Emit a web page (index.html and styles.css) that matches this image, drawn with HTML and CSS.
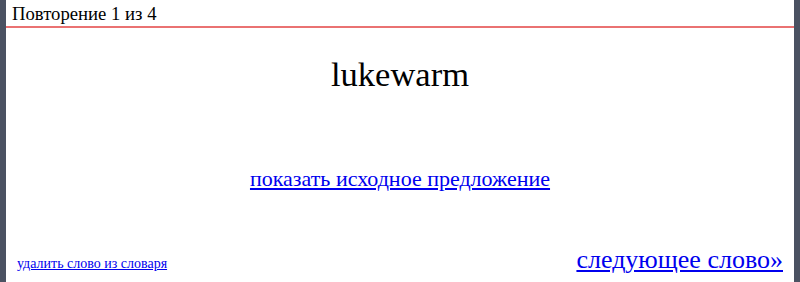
FILE: index.html
```html
<!DOCTYPE html>
<html lang="ru">
<head>
<meta charset="utf-8">
<link rel="stylesheet" href="styles.css">
</head>
<body>
<div class="panel">
  <div class="header">Повторение 1 из 4</div>
  <div class="word">lukewarm</div>
  <div class="show"><a href="#">показать исходное предложение</a></div>
  <div class="footer">
    <a class="delete" href="#">удалить слово из словаря</a>
    <a class="next" href="#">следующее слово»</a>
  </div>
</div>
</body>
</html>
```
FILE: styles.css
```css
html, body {
  margin: 0;
  padding: 0;
  height: 100%;
}
body {
  background: #4b5262;
  padding: 0 6px;
  box-sizing: border-box;
  font-family: "Liberation Serif", "DejaVu Serif", serif;
  color: #000;
}
.panel {
  background: #fff;
  height: 282px;
  display: flex;
  flex-direction: column;
}
.header {
  font-size: 18.7px;
  line-height: 24px;
  padding: 2px 0 0 6px;
  border-bottom: 2px solid #ea7272;
}
.word {
  text-align: center;
  font-size: 34.5px;
  line-height: 40px;
  margin-top: 26px;
}
.show {
  text-align: center;
  font-size: 22px;
  line-height: 26px;
  margin-top: 72px;
}
a {
  color: #0000ee;
}
.footer {
  margin-top: auto;
  display: flex;
  justify-content: space-between;
  align-items: baseline;
  padding: 0 11px 7px 11px;
}
.delete {
  font-size: 14px;
}
.next {
  font-size: 26px;
}
```
